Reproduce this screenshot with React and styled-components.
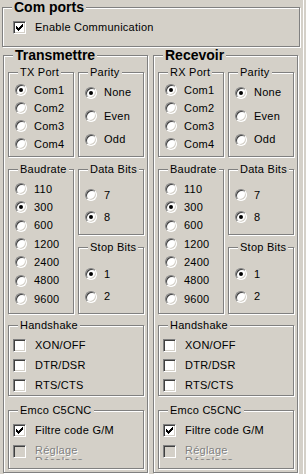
import React from 'react';
import styled, { createGlobalStyle } from 'styled-components';

const GlobalStyle = createGlobalStyle`
  html, body {
    margin: 0;
    padding: 0;
    background: #d4d0c8;
  }
`;

const sides = [
  { title: 'Transmettre', port: 'TX Port' },
  { title: 'Recevoir', port: 'RX Port' },
];

const ports = ['Com1', 'Com2', 'Com3', 'Com4'];
const parities = ['None', 'Even', 'Odd'];
const bauds = ['110', '300', '600', '1200', '2400', '4800', '9600'];
const handshakes = ['XON/OFF', 'DTR/DSR', 'RTS/CTS'];

function Tick() {
  // classic 7x7 windows check mark
  return (
    <svg width="7" height="7" viewBox="0 0 7 7" shapeRendering="crispEdges">
      <path
        fill="#000"
        d="M0 2h1v3H0z M1 3h1v3H1z M2 4h1v3H2z M3 3h1v3H3z M4 2h1v3H4z M5 1h1v3H5z M6 0h1v3H6z"
      />
    </svg>
  );
}

function RadioGroup({ items, value, row, top }) {
  return (
    <Options $row={row} $pt={top} $pl={6}>
      {items.map((item) => (
        <Option key={item} $gap={7}>
          <Radio $on={item === value} />
          <Caption>{item}</Caption>
        </Option>
      ))}
    </Options>
  );
}

function Side({ title, port }) {
  return (
    <Group $w={145} $h={425}>
      <Title $bold>{title}</Title>
      <SideBody>
        <Pair>
          <Group $w={66} $h={91}>
            <Title>{port}</Title>
            <RadioGroup items={ports} value="Com1" row={18} top={2} />
          </Group>
          <Group $w={66} $h={91}>
            <Title>Parity</Title>
            <RadioGroup items={parities} value="None" row={23.5} top={2} />
          </Group>
        </Pair>

        <Pair $mt={6}>
          <Group $w={66} $h={151}>
            <Title>Baudrate</Title>
            <RadioGroup items={bauds} value="300" row={18.33} top={4} />
          </Group>
          <Stack>
            <Group $w={66} $h={72}>
              <Title>Data Bits</Title>
              <RadioGroup items={['7', '8']} value="8" row={22} top={8} />
            </Group>
            <Group $w={66} $h={73}>
              <Title>Stop Bits</Title>
              <RadioGroup items={['1', '2']} value="1" row={22.5} top={9} />
            </Group>
          </Stack>
        </Pair>

        <Group $w={136} $h={77} $mt={5}>
          <Title>Handshake</Title>
          <Options $row={19.75} $pt={4} $pl={4}>
            {handshakes.map((h) => (
              <Option key={h} $gap={9}>
                <Check />
                <Caption>{h}</Caption>
              </Option>
            ))}
          </Options>
        </Group>

        <Group $w={136} $h={65} $mt={8}>
          <Title>Emco C5CNC</Title>
          <Options $row={21} $pt={3} $pl={4}>
            <Option $gap={9}>
              <Check><Tick /></Check>
              <Caption>Filtre code G/M</Caption>
            </Option>
            <Option $gap={9} $top>
              <Check $disabled />
              <Clipped>Réglage Décalage</Clipped>
            </Option>
          </Options>
        </Group>
      </SideBody>
    </Group>
  );
}

export default function App() {
  return (
    <>
      <GlobalStyle />
      <Screen>
        <Group $w={298} $h={47} $ml={2}>
          <Title $bold>Com ports</Title>
          <Options $row={17} $pt={4} $pl={10}>
            <Option $gap={9}>
              <Check><Tick /></Check>
              <Caption>Enable Communication</Caption>
            </Option>
          </Options>
        </Group>
        <Columns>
          {sides.map((s) => (
            <Side key={s.title} {...s} />
          ))}
        </Columns>
      </Screen>
    </>
  );
}

const Screen = styled.div`
  width: 306px;
  height: 474px;
  overflow: hidden;
  display: flex;
  flex-direction: column;
  background: #d4d0c8;
  box-shadow: inset -2px 0 0 #d4d0c8, inset -3px 0 0 #fff;
  font-family: "Liberation Sans", Arial, sans-serif;
  font-size: 11px;
  letter-spacing: 0.25px;
  color: #000;
`;

const Group = styled.fieldset`
  box-sizing: border-box;
  flex: none;
  min-width: 0;
  width: ${(p) => p.$w}px;
  height: ${(p) => p.$h}px;
  margin: ${(p) => p.$mt || 0}px 0 0 ${(p) => p.$ml || 0}px;
  padding: 0;
  border: 1px solid #808080;
  box-shadow: inset 1px 1px 0 #fff, 1px 1px 0 #fff;
`;

const Title = styled.legend`
  margin-left: 9px;
  padding: 0 2px;
  background: #d4d0c8;
  font-weight: ${(p) => (p.$bold ? 700 : 400)};
  font-size: ${(p) => (p.$bold ? 14 : 11)}px;
  line-height: ${(p) => (p.$bold ? 15 : 13)}px;
  letter-spacing: ${(p) => (p.$bold ? 0 : 0.25)}px;
`;

const Columns = styled.div`
  display: flex;
  gap: 5px;
  margin: 1px 0 0 3px;
`;

const SideBody = styled.div`
  display: flex;
  flex-direction: column;
  padding: 3px 3px 0 4px;
`;

const Pair = styled.div`
  display: flex;
  gap: 4px;
  margin-top: ${(p) => p.$mt || 0}px;
`;

const Stack = styled.div`
  display: flex;
  flex-direction: column;
  gap: 6px;
`;

const Options = styled.div`
  display: grid;
  grid-auto-rows: ${(p) => p.$row}px;
  padding: ${(p) => p.$pt}px 0 0 ${(p) => p.$pl}px;
`;

const Option = styled.label`
  display: flex;
  align-items: ${(p) => (p.$top ? 'flex-start' : 'center')};
  gap: ${(p) => p.$gap}px;
  white-space: nowrap;
`;

const Radio = styled.span`
  box-sizing: border-box;
  flex: none;
  width: 12px;
  height: 12px;
  border-radius: 50%;
  border: 1px solid;
  border-color: #808080 #fff #fff #808080;
  box-shadow: inset 1px 1px 0 #404040, inset -1px -1px 0 #d4d0c8;
  background: #fff;
  display: flex;
  align-items: center;
  justify-content: center;

  &::after {
    content: '';
    width: 4px;
    height: 4px;
    border-radius: 50%;
    background: ${(p) => (p.$on ? '#000' : 'transparent')};
  }
`;

const Check = styled.span`
  box-sizing: border-box;
  flex: none;
  width: 13px;
  height: 13px;
  margin-top: ${(p) => (p.$disabled ? 4 : 0)}px;
  border: 1px solid;
  border-color: #808080 #fff #fff #808080;
  box-shadow: inset 1px 1px 0 #404040, inset -1px -1px 0 #d4d0c8;
  background: ${(p) => (p.$disabled ? '#d4d0c8' : '#fff')};
  display: flex;
  align-items: center;
  justify-content: center;

  svg {
    display: block;
  }
`;

const Caption = styled.span`
  line-height: 13px;
`;

const Clipped = styled.span`
  width: 56px;
  height: 15px;
  margin-top: 4px;
  overflow: hidden;
  white-space: normal;
  line-height: 11px;
  color: #808080;
  text-shadow: 1px 1px 0 #fff;
`;
